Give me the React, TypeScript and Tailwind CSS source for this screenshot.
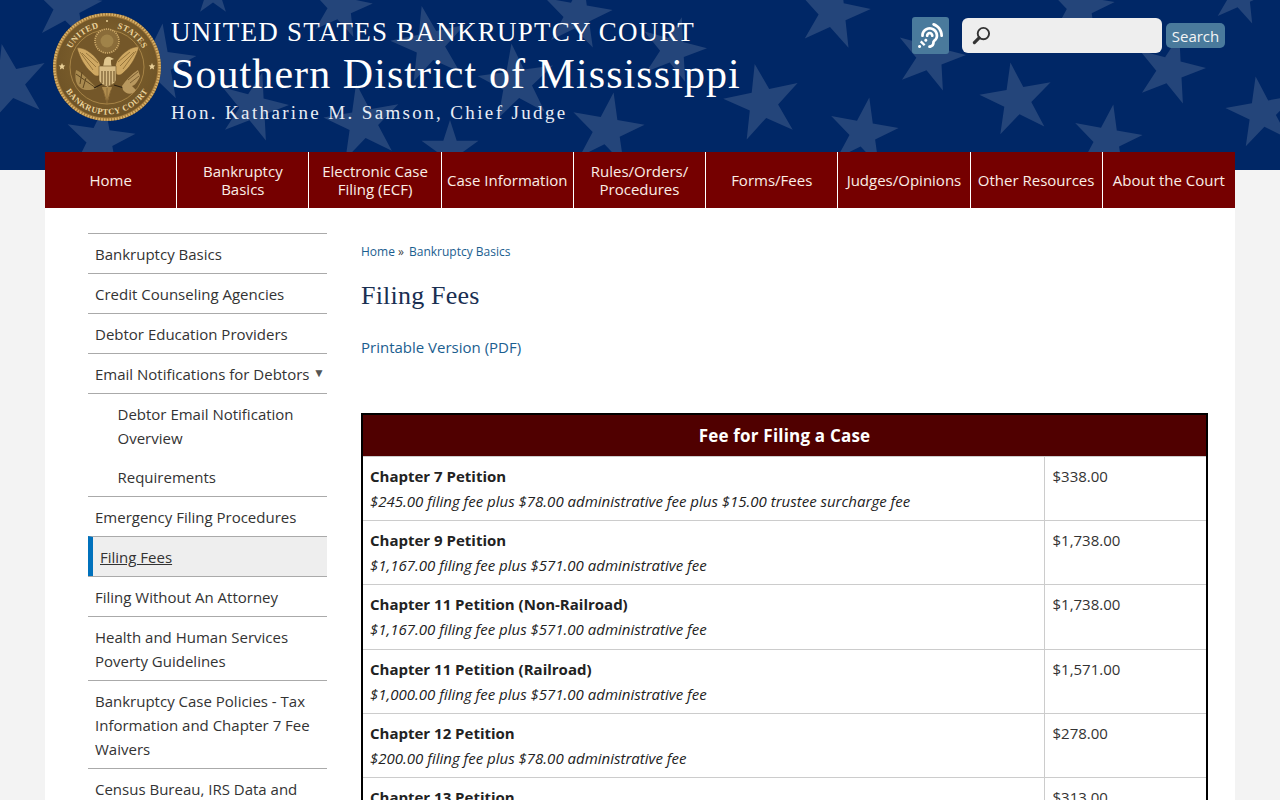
import React from "react";
import { FaAssistiveListeningSystems } from "react-icons/fa";

const stars: [number, number, number, number][] = [
  [67, 7, 36, 8], [10, 83, 40, -12], [157, 63, 40, 8], [253, 107, 36, 15], [100, 140, 36, 8],
  [363, 123, 40, -10], [340, 7, 33, 12], [213, -6, 22, 0], [430, 45, 40, -12], [577, 15, 36, 10],
  [673, 50, 34, 15], [833, 13, 38, 12], [517, 83, 40, -8], [763, 103, 40, -12], [607, 130, 38, 10],
  [863, 133, 36, 10], [450, 150, 30, 0], [930, 57, 36, 15], [1017, 100, 38, -10], [1170, 70, 36, 15],
  [1107, 140, 36, 10], [1262, 113, 37, -10], [1080, 7, 35, 10], [1240, -4, 30, 12],
];

function starPoints(cx: number, cy: number, r: number, rot: number) {
  const pts: string[] = [];
  for (let i = 0; i < 10; i++) {
    const rad = i % 2 === 0 ? r : r * 0.38;
    const a = ((rot + i * 36 - 90) * Math.PI) / 180;
    pts.push(`${(cx + rad * Math.cos(a)).toFixed(1)},${(cy + rad * Math.sin(a)).toFixed(1)}`);
  }
  return pts.join(" ");
}

function Seal() {
  const wing = "M25 36 C31 35 40 40 47 50 C49 54 49 58 48 63 C44 66 41 62 39 60 C33 55 28 46 25 36 Z";
  const serif = "'Liberation Serif',serif";
  return (
    <svg viewBox="0 0 110 110" className="w-[110px] h-[110px] shrink-0">
      <defs>
        <radialGradient id="field" cx="50%" cy="45%" r="60%">
          <stop offset="0%" stopColor="#85662f" />
          <stop offset="100%" stopColor="#6d5226" />
        </radialGradient>
        <path id="topArc" d="M15 55 A40 40 0 0 1 95 55" />
        <path id="botArc" d="M7.5 55 A47.5 47.5 0 0 0 102.5 55" />
      </defs>
      <circle cx="55" cy="55" r="54" fill="#a37a3a" />
      <circle cx="55" cy="55" r="52.6" fill="none" stroke="#d9b26a" strokeWidth="2.4" strokeDasharray="1.6 1.2" />
      <circle cx="55" cy="55" r="50.5" fill="url(#field)" />
      <circle cx="55" cy="55" r="37" fill="#745729" stroke="#b48f4e" strokeWidth="0.8" />
      <text fill="#ecd49c" fontSize="8.6" fontWeight="700" fontFamily={serif} letterSpacing="0.4">
        <textPath href="#topArc" startOffset="15%">UNITED</textPath>
      </text>
      <text fill="#ecd49c" fontSize="8.6" fontWeight="700" fontFamily={serif} letterSpacing="0.4">
        <textPath href="#topArc" startOffset="58%">STATES</textPath>
      </text>
      <text fill="#ecd49c" fontSize="8.4" fontWeight="700" fontFamily={serif} letterSpacing="0.5" textAnchor="middle">
        <textPath href="#botArc" startOffset="50%">BANKRUPTCY COURT</textPath>
      </text>
      <path d="M8 52 l1 2.2 2.3 .3 -1.7 1.6 .5 2.3 -2.1-1.2 -2.1 1.2 .5-2.3 -1.7-1.6 2.3-.3z" fill="#e9cf96" transform="translate(2,-1)" />
      <path d="M102 52 l1 2.2 2.3 .3 -1.7 1.6 .5 2.3 -2.1-1.2 -2.1 1.2 .5-2.3 -1.7-1.6 2.3-.3z" fill="#e9cf96" transform="translate(-2,-1)" />
      <circle cx="55" cy="9" r="1" fill="#e9cf96" />
      <circle cx="55" cy="29" r="12" fill="#8a6c39" stroke="#d0ad6c" strokeWidth="1.6" strokeDasharray="1.2 1" />
      <circle cx="55" cy="29" r="6.5" fill="#a08349" />
      <path d={wing} fill="#cfa862" stroke="#6f5327" strokeWidth="0.5" />
      <path d={wing} fill="#cfa862" stroke="#6f5327" strokeWidth="0.5" transform="matrix(-1 0 0 1 112 -1)" />
      <path d="M30 41 L44 55 M34 41 L46 51 M28 40 L41 58" stroke="#8a6932" strokeWidth="0.8" />
      <path d="M82 40 L68 54 M78 40 L66 50 M84 39 L71 57" stroke="#8a6932" strokeWidth="0.8" />
      <path d="M52 50 C52 46 55 44 58 45 L62 47 L59 48 C59 51 59 53 60 55 L51 55 Z" fill="#e0c68e" />
      <path d="M47 54 H64 V68 C64 71 59 73 55.5 75 C52 73 47 71 47 68 Z" fill="#d9bd85" stroke="#6d5226" strokeWidth="0.6" />
      <path d="M50 59 V71 M53 59 V73 M56 59 V74 M59 59 V73 M62 59 V70" stroke="#6d5226" strokeWidth="1.1" />
      <path d="M50 75 L55 92 L60 75 Z" fill="#b08c4d" />
      <path d="M51 78 L55 90 M55 76 V91 M59 78 L55 90" stroke="#75582a" strokeWidth="0.6" />
      <path d="M24 58 C30 60 36 68 45 76 C36 80 28 78 25 72 C23 68 23 62 24 58 Z" fill="#a98a4f" />
      <path d="M24 62 L44 76 M30 60 L28 72 M34 66 L31 76" stroke="#5f4720" strokeWidth="1" />
      <path d="M42 76 L50 72 M62 73 L72 76" stroke="#2f2210" strokeWidth="1.2" />
      <path d="M70 74 C74 68 80 62 86 58 L88 64 C86 70 82 74 80 74 L84 78 C80 84 74 82 71 78 Z" fill="#b9985e" />
      <path d="M76 68 L86 60 M78 71 L87 64" stroke="#6d5226" strokeWidth="0.8" />
    </svg>
  );
}

const nav = [
  ["Home"], ["Bankruptcy", "Basics"], ["Electronic Case", "Filing (ECF)"], ["Case Information"],
  ["Rules/Orders/", "Procedures"], ["Forms/Fees"], ["Judges/Opinions"], ["Other Resources"], ["About the Court"],
];

function SideItem({ children }: { children: React.ReactNode }) {
  return <li className="border-t border-[#aaaaaa] pt-2 pb-[7px] px-[7px] text-[#333333]">{children}</li>;
}

const rows = [
  ["Chapter 7 Petition", "$245.00 filing fee plus $78.00 administrative fee plus $15.00 trustee surcharge fee", "$338.00"],
  ["Chapter 9 Petition", "$1,167.00 filing fee plus $571.00 administrative fee", "$1,738.00"],
  ["Chapter 11 Petition (Non-Railroad)", "$1,167.00 filing fee plus $571.00 administrative fee", "$1,738.00"],
  ["Chapter 11 Petition (Railroad)", "$1,000.00 filing fee plus $571.00 administrative fee", "$1,571.00"],
  ["Chapter 12 Petition", "$200.00 filing fee plus $78.00 administrative fee", "$278.00"],
  ["Chapter 13 Petition", "$235.00 filing fee plus $78.00 administrative fee", "$313.00"],
];

export default function App() {
  return (
    <div className="h-screen overflow-hidden bg-[#f3f3f3] font-['Open_Sans',sans-serif] text-[15px] leading-6 text-[#222222]">
      <header className="relative h-[170px] bg-[#002766] overflow-hidden">
        <svg className="absolute inset-0 w-full h-full" viewBox="0 0 1280 170">
          {stars.map(([x, y, r, a], i) => (
            <polygon key={i} points={starPoints(x, y, r, a)} fill="#24457a" />
          ))}
        </svg>
        <div className="relative flex justify-between pl-[52px] pr-[55px] pt-3">
          <div className="flex">
            <Seal />
            <div className="ml-[9px] font-['Liberation_Serif',serif] text-white">
              <div className="text-[27px] leading-[32px] mt-1 tracking-[1.25px]">UNITED STATES BANKRUPTCY COURT</div>
              <div className="text-[42px] leading-[50px] mt-[1px] tracking-[1.07px]">Southern District of Mississippi</div>
              <div className="text-[19px] leading-6 mt-[2px] tracking-[2.36px] text-[#e8edf5]">Hon. Katharine M. Samson, Chief Judge</div>
            </div>
          </div>
          <div className="flex items-start pt-[5px]">
            <div className="w-[37px] h-[37px] rounded-[3px] bg-[#4a7a9c] flex items-center justify-center text-white">
              <FaAssistiveListeningSystems className="w-[25px] h-[25px]" />
            </div>
            <div className="ml-[13px] mt-[1px] w-[200px] h-[35px] rounded-md bg-[#eeeeee] flex items-center pl-[10px]">
              <svg viewBox="0 0 20 20" className="w-[19px] h-[19px]">
                <circle cx="12" cy="8" r="6" fill="none" stroke="#333333" strokeWidth="2" />
                <path d="M7.5 12.5 L2.5 17.5" stroke="#333333" strokeWidth="3.4" strokeLinecap="round" />
              </svg>
            </div>
            <button className="ml-[4px] mt-[6px] w-[59px] h-[25px] rounded-[5px] bg-[#4a7a9c] text-[#f4f4f4] text-[15px] leading-[27px]">Search</button>
          </div>
        </div>
      </header>

      <div className="relative -mt-[18px] mx-[45px] bg-white">
        <nav className="grid grid-cols-9 h-[56px] bg-[#750000] text-[#fbeee6] text-[15px] leading-[18px] text-center">
          {nav.map((lines, i) => (
            <div key={i} className={`flex flex-col items-center justify-center ${i < 8 ? "border-r border-white" : ""}`}>
              {lines.map((l) => (
                <span key={l} className="whitespace-nowrap">{l}</span>
              ))}
            </div>
          ))}
        </nav>

        <div className="flex pl-[43px] pr-[27px] pt-[25px]">
          <aside className="w-[239px] shrink-0">
            <ul>
              <SideItem>Bankruptcy Basics</SideItem>
              <SideItem>Credit Counseling Agencies</SideItem>
              <SideItem>Debtor Education Providers</SideItem>
              <SideItem>
                <span className="relative">
                  Email Notifications for Debtors
                  <span className="absolute left-[218px] -top-[3px] text-[12px] text-[#555555]">▼</span>
                </span>
              </SideItem>
              <li className="border-t border-[#aaaaaa] text-[#333333] pl-[29.5px] pr-[7px]">
                <div className="pt-2 pb-[7px]">Debtor Email Notification<br />Overview</div>
                <div className="pt-2 pb-[7px]">Requirements</div>
              </li>
              <SideItem>Emergency Filing Procedures</SideItem>
              <li className="border-t border-[#aaaaaa] border-l-[5px] border-l-[#0071bc] bg-[#eeeeee] pl-[7px] pt-2 pb-[7px] text-[#333333] underline">
                Filing Fees
              </li>
              <SideItem>Filing Without An Attorney</SideItem>
              <SideItem>Health and Human Services<br />Poverty Guidelines</SideItem>
              <SideItem>Bankruptcy Case Policies - Tax<br />Information and Chapter 7 Fee<br />Waivers</SideItem>
              <SideItem>Census Bureau, IRS Data and<br />Administrative Expenses</SideItem>
            </ul>
          </aside>

          <main className="ml-[34px] flex-1">
            <div className="text-[12px] leading-4 mt-[11px] text-[#1b5e8f]">
              Home<span className="text-[#444444] ml-[3px] mr-[2px]">»</span> <span>Bankruptcy Basics</span>
            </div>
            <h1 className="font-['Liberation_Serif',serif] text-[26px] leading-8 mt-[20px] text-[#1a2f52] tracking-[0.2px]">Filing Fees</h1>
            <div className="mt-[23px] text-[#1b5e8f]">Printable Version (PDF)</div>
            <table className="mt-[54px] w-[845px] border-2 border-black border-collapse table-fixed">
              <colgroup>
                <col className="w-[682px]" />
                <col className="w-[163px]" />
              </colgroup>
              <thead>
                <tr>
                  <th colSpan={2} className="h-[42px] pt-[2px] bg-[#500000] text-white text-[17px] tracking-[0.2px] font-bold text-center">
                    Fee for Filing a Case
                  </th>
                </tr>
              </thead>
              <tbody>
                {rows.map((r) => (
                  <tr key={r[0]}>
                    <td className="border border-[#cccccc] border-l-0 px-[7px] py-[7px] align-top">
                      <b className="font-bold text-[#222222] block leading-[25px]">{r[0]}</b>
                      <i className="italic block whitespace-nowrap leading-[24.34px]">{r[1]}</i>
                    </td>
                    <td className="border border-[#cccccc] border-r-0 px-2 py-[7px] align-top leading-[25px] text-[#333333]">{r[2]}</td>
                  </tr>
                ))}
              </tbody>
            </table>
          </main>
        </div>
      </div>
    </div>
  );
}
